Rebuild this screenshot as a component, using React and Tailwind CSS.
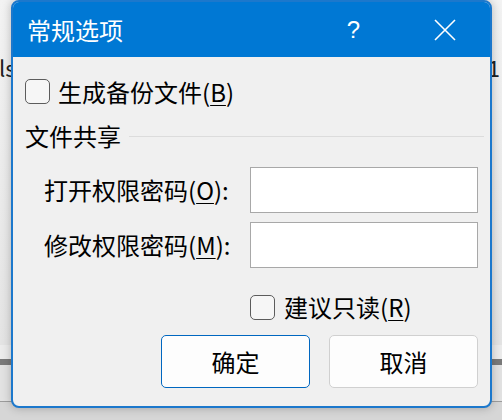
import React from "react";

const font = { fontFamily: '"Noto Sans CJK SC", "Noto Sans", sans-serif' };

function CheckBox() {
  return (
    <div className="w-[25px] h-[25px] rounded-[5px] border-[1.5px] border-[#5c5c5c] bg-[#f6f6f6] shrink-0" />
  );
}

export default function App() {
  return (
    <div className="relative w-[502px] h-[420px] overflow-hidden text-black" style={font}>
      {/* background window content */}
      <div className="flex flex-col w-full h-full">
        <div className="h-[345px] bg-gradient-to-b from-[#f3f3f3] to-[#e4e4e4] flex justify-between items-start pt-[54px] text-[22px] leading-[26px] text-[#202020]">
          <span className="-ml-[1px]">ls</span>
          <span className="mr-[2px]">1</span>
        </div>
        <div className="h-[14px] bg-[#ececec]" />
        <div className="h-[6px] bg-[#7a7a7a]" />
        <div className="h-[36px] bg-[#e2e2e2]" />
        <div className="h-[1px] bg-[#9c9c9c]" />
        <div className="flex-1 bg-[#d6d6d6]" />
      </div>

      {/* dialog */}
      <div className="absolute left-[11px] top-0 w-[481px] h-[408px] rounded-[8px] border-2 border-[#1c78cc] bg-[#f0f0f0] flex flex-col overflow-hidden shadow-[0_0_10px_rgba(0,0,0,0.25)]">
        <div className="h-[55px] bg-[#0078d4] text-white flex items-center pl-[14px] shrink-0">
          <span className="text-[24px] leading-none">常规选项</span>
          <span className="ml-auto text-[24px] leading-none mr-[74px]" style={{ fontFamily: '"Liberation Sans", sans-serif', fontWeight: 300 }}>?</span>
          <svg width="22" height="22" viewBox="0 0 22 22" className="mr-[34px]">
            <path d="M1 1 L21 21 M21 1 L1 21" stroke="white" strokeWidth="1.6" fill="none" />
          </svg>
        </div>

        <div className="flex flex-col pl-[12px] pr-[11px]">
          <div className="flex items-center mt-[22px] h-[25px]">
            <CheckBox />
            <span className="ml-[8px] text-[24px] leading-none">
              生成备份文件(<u className="underline-offset-[3px] decoration-1">B</u>)
            </span>
          </div>

          <div className="flex items-center mt-[20px] h-[24px]">
            <span className="text-[24px] leading-none">文件共享</span>
            <div className="flex-1 h-[1px] bg-[#dcdcdc] ml-[8px] -mr-[5px]" />
          </div>

          <div className="flex items-center mt-[19px] pl-[19px]">
            <span className="w-[206px] shrink-0 text-[24px] leading-none">
              打开权限密码(<u className="underline-offset-[3px] decoration-1">O</u>):
            </span>
            <div className="w-[228px] h-[46px] shrink-0 bg-white border border-[#a8a8a8]" />
          </div>

          <div className="flex items-center mt-[9px] pl-[19px]">
            <span className="w-[206px] shrink-0 text-[24px] leading-none">
              修改权限密码(<u className="underline-offset-[3px] decoration-1">M</u>):
            </span>
            <div className="w-[228px] h-[46px] shrink-0 bg-white border border-[#a8a8a8]" />
          </div>

          <div className="flex items-center mt-[26px] h-[26px] pl-[225px]">
            <CheckBox />
            <span className="ml-[9px] text-[24px] leading-none">
              建议只读(<u className="underline-offset-[3px] decoration-1">R</u>)
            </span>
          </div>

          <div className="flex justify-end gap-[19px] mt-[15px] pr-[1px]">
            <div className="w-[149px] h-[53px] rounded-[5px] border border-[#0067c0] bg-[#fdfdfd] flex items-center justify-center text-[24px] leading-none">
              确定
            </div>
            <div className="w-[149px] h-[53px] rounded-[5px] border border-[#d0d0d0] bg-[#fdfdfd] flex items-center justify-center text-[24px] leading-none">
              取消
            </div>
          </div>
        </div>
      </div>
    </div>
  );
}
